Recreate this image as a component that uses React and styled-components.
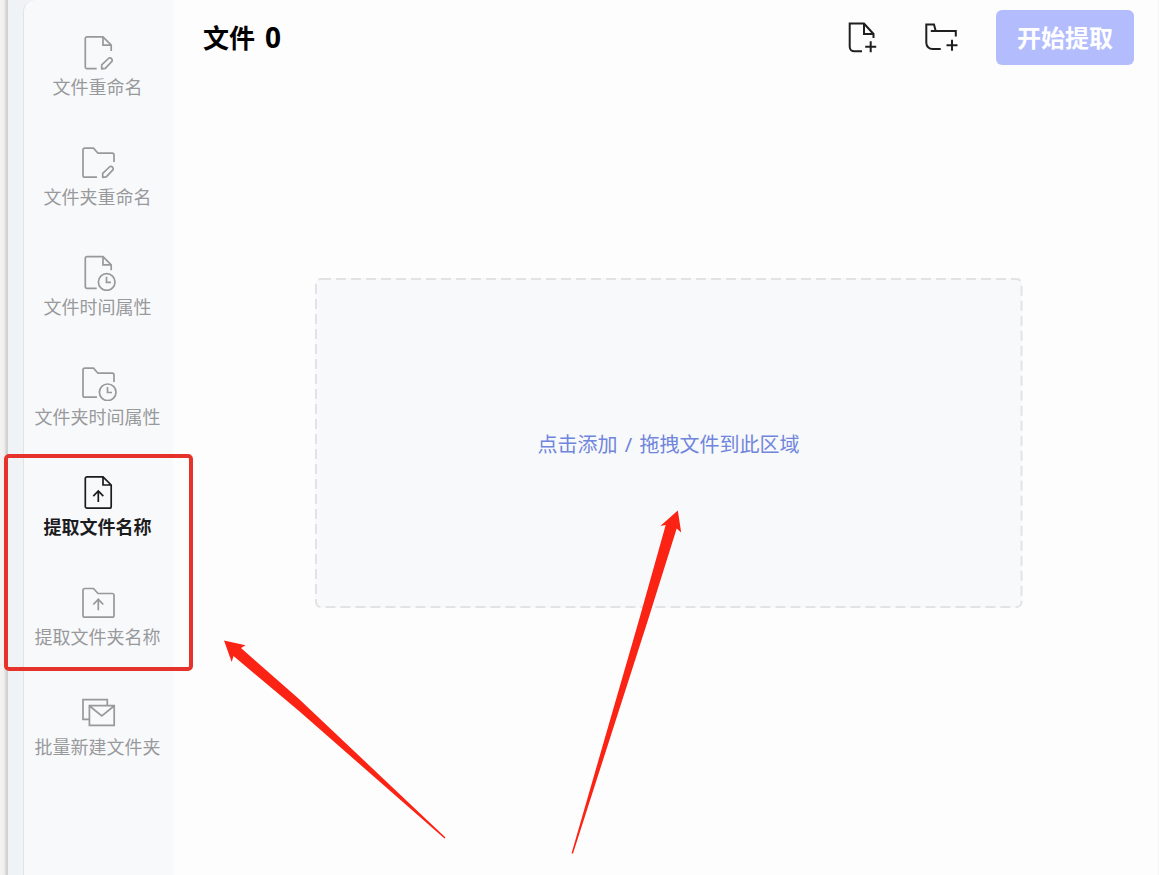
import React from "react";
import styled, { createGlobalStyle } from "styled-components";

const GlobalStyle = createGlobalStyle`
  * { box-sizing: border-box; }
  body {
    margin: 0;
    background: #fdfdfd;
    font-family: "Noto Sans", "Noto Sans CJK SC", sans-serif;
  }
  button {
    margin: 0;
    padding: 0;
    border: 0;
    background: none;
    font: inherit;
    cursor: pointer;
  }
`;

const Window = styled.div`
  position: relative;
  display: flex;
  min-height: 100vh;
  overflow: hidden;
`;

const WindowEdge = styled.div`
  flex: none;
  width: 8px;
  background: linear-gradient(to right, #f4f3f1 0, #f0efed 50%, #c9cac8 90%, #dcdedf 100%);
`;

const Frame = styled.div`
  flex: 1;
  display: flex;
  padding-left: 15px;
  background: #f0f3f5;
`;

const Sidebar = styled.nav`
  flex: none;
  width: 150px;
  padding: 35px 2px 40px 0;
  display: flex;
  flex-direction: column;
  align-items: center;
  gap: 46px;
  background: #f8f9fb;
  border-left: 1px solid #e1e4e7;
  border-top-left-radius: 12px;
`;

const NavItem = styled.button`
  display: flex;
  flex-direction: column;
  align-items: center;
  gap: 4px;
  color: ${(p) => (p.$active ? "#1c1c1e" : "#98999b")};
  font-weight: ${(p) => (p.$active ? 700 : 400)};
  font-size: 18px;
  line-height: 24px;
  white-space: nowrap;
`;

const Main = styled.main`
  flex: 1;
  display: flex;
  flex-direction: column;
  padding: 10px 24px 40px 30px;
  background: #fdfdfd;
  border-right: 1px solid #f4f4f4;
`;

const Header = styled.header`
  display: flex;
  align-items: center;
  justify-content: space-between;
`;

const Title = styled.h1`
  display: flex;
  align-items: baseline;
  gap: 10px;
  margin: 0;
  font-size: 26px;
  line-height: 36px;
  font-weight: 700;
  color: #000;
`;

const Count = styled.span`
  font-size: 28px;
`;

const Actions = styled.div`
  display: flex;
  align-items: center;
  gap: 36px;
`;

const IconGroup = styled.div`
  display: flex;
  gap: 44px;
`;

const IconButton = styled.button`
  display: flex;
  color: #1f1f21;
`;

const StartButton = styled.button`
  width: 138px;
  height: 55px;
  border-radius: 6px;
  background: #b3bdfe;
  color: #fff;
  font-size: 24px;
  line-height: 32px;
  font-weight: 700;
`;

const DropZone = styled.button`
  position: relative;
  align-self: center;
  width: 76%;
  min-height: 330px;
  margin-top: 213px;
  padding-top: 4px;
  border-radius: 6px;
  background: #f8f9fb;
  color: #7085dc;
  font-size: 20px;
  line-height: 28px;
`;

const DashedOutline = styled.svg`
  position: absolute;
  inset: 0;
  width: 100%;
  height: 100%;
  overflow: visible;
`;

const Slash = styled.span`
  padding: 0 2px;
`;

const Highlight = styled.div`
  position: absolute;
  left: 4px;
  top: 454px;
  width: 189px;
  height: 217px;
  border: 4px solid #e5322a;
  border-radius: 5px;
  pointer-events: none;
`;

const Arrows = styled.svg`
  position: absolute;
  left: 0;
  top: 0;
  pointer-events: none;
`;

const NavSvg = ({ children }) => (
  <svg width="40" height="36" viewBox="0 0 40 36" fill="none" stroke="currentColor" strokeWidth="1.7" aria-hidden="true">
    {children}
  </svg>
);

const HeaderSvg = ({ children }) => (
  <svg width="36" height="36" viewBox="0 0 36 36" fill="none" stroke="currentColor" strokeWidth="2" aria-hidden="true">
    {children}
  </svg>
);

const OpenFile = () => (
  <path d="M18.7 33.7H9a1.7 1.7 0 0 1-1.7-1.7V3.6A1.7 1.7 0 0 1 9 1.9h16l8.2 8.2V16M25 1.9v8.2h8.2" />
);
const OpenFolder = () => (
  <path d="M19 32.2H6.7A1.7 1.7 0 0 1 5 30.5V4.9A1.7 1.7 0 0 1 6.7 3.2h8.8l4.5 5H34.3a1.7 1.7 0 0 1 1.7 1.7V17" />
);
const Pencil = () => (
  <path d="M23.7 33.8v-4l7.3-6.8q1.4-.6 2.5.6t.6 2.5l-6.8 7.3z" strokeLinejoin="round" />
);

const icons = {
  fileEdit: <><OpenFile /><Pencil /></>,
  folderEdit: <><OpenFolder /><g transform="translate(1 -1.5)"><Pencil /></g></>,
  fileClock: (
    <>
      <path d="M18.7 33.3H9a1.7 1.7 0 0 1-1.7-1.7V3.3A1.7 1.7 0 0 1 9 1.6h16l8.2 8.2V15.2M25 1.6v8.2h8.2" />
      <circle cx="28.7" cy="27" r="8.3" />
      <path d="M28.5 21.8v5.5h4.5" />
    </>
  ),
  folderClock: (
    <>
      <OpenFolder />
      <circle cx="29.7" cy="27.3" r="8.3" />
      <path d="M29.5 22v5.5H34" />
    </>
  ),
  fileUp: (
    <>
      <path d="M25 1.8H9a1.7 1.7 0 0 0-1.7 1.7v28A1.7 1.7 0 0 0 9 33.2h22.5a1.7 1.7 0 0 0 1.7-1.7V10zM25 1.8V10h8.2" />
      <path d="M20.3 27V16M15.3 21.2l5-5.2 5 5.2" />
    </>
  ),
  folderUp: (
    <>
      <path d="M6.7 3.5h8.8l4.5 5h14.3a1.7 1.7 0 0 1 1.7 1.7v20.3a1.7 1.7 0 0 1-1.7 1.7H6.7A1.7 1.7 0 0 1 5 30.5V5.2a1.7 1.7 0 0 1 1.7-1.7z" />
      <path d="M20.3 25.3V14.5M15.3 19.5l5-5.2 5 5.2" />
    </>
  ),
  mail: (
    <>
      <path d="M29.3 10.5V4.6H5v19.7h6.3" />
      <path d="M11.4 10.7h24.8v19.7H11.4zM11.6 11l12.2 9.8L36 11" />
    </>
  ),
};

const navItems = [
  { icon: "fileEdit", label: "文件重命名" },
  { icon: "folderEdit", label: "文件夹重命名" },
  { icon: "fileClock", label: "文件时间属性" },
  { icon: "folderClock", label: "文件夹时间属性" },
  { icon: "fileUp", label: "提取文件名称", active: true },
  { icon: "folderUp", label: "提取文件夹名称" },
  { icon: "mail", label: "批量新建文件夹" },
];

export default function App() {
  return (
    <>
      <GlobalStyle />
      <Window>
        <WindowEdge />
        <Frame>
          <Sidebar>
            {navItems.map((item) => (
              <NavItem key={item.label} type="button" $active={item.active} aria-current={item.active ? "page" : undefined}>
                <NavSvg>{icons[item.icon]}</NavSvg>
                <span>{item.label}</span>
              </NavItem>
            ))}
          </Sidebar>
          <Main>
            <Header>
              <Title>
                文件 <Count>0</Count>
              </Title>
              <Actions>
                <IconGroup>
                  <IconButton type="button" aria-label="添加文件">
                    <HeaderSvg>
                      <path d="M18 31.3h-7.8a4.500 4.500 0 0 1-4.500-4.500V3.600H20L29.500 14v4M20 3.600V14h9.500" />
                      <path d="M26.700 21.200v11M21.200 26.700h11" />
                    </HeaderSvg>
                  </IconButton>
                  <IconButton type="button" aria-label="添加文件夹">
                    <HeaderSvg>
                      <path d="M16.700 29H8.500A6.200 6.200 0 0 1 2.300 22.800V4.500H10l1.700 6.500M6.800 11h25v5.500" />
                      <path d="M28 19.800v11M22.500 25.300h11" />
                    </HeaderSvg>
                  </IconButton>
                </IconGroup>
                <StartButton type="button">开始提取</StartButton>
              </Actions>
            </Header>
            <DropZone type="button">
              <DashedOutline aria-hidden="true">
                <rect x="1" y="1" rx="5" fill="none" stroke="#e2e3e4" strokeWidth="2" strokeDasharray="10 5" style={{ width: "calc(100% - 2px)", height: "calc(100% - 2px)" }} />
              </DashedOutline>
              点击添加<Slash> / </Slash>拖拽文件到此区域
            </DropZone>
          </Main>
        </Frame>
        <Highlight />
        <Arrows width="700" height="870" viewBox="0 0 700 870" fill="#fb2314" aria-hidden="true">
          <path d="M224 640.5L245.5 645.3L241 648L299 699L445.500 837.500L444.500 838.500L299 711L233.500 656L231.700 662Z" />
          <path d="M677.800 510.500L681.200 532.500L676.700 528.500L648 620L573 853.500H571.500L639 620L665.700 525L660.300 526Z" />
        </Arrows>
      </Window>
    </>
  );
}
